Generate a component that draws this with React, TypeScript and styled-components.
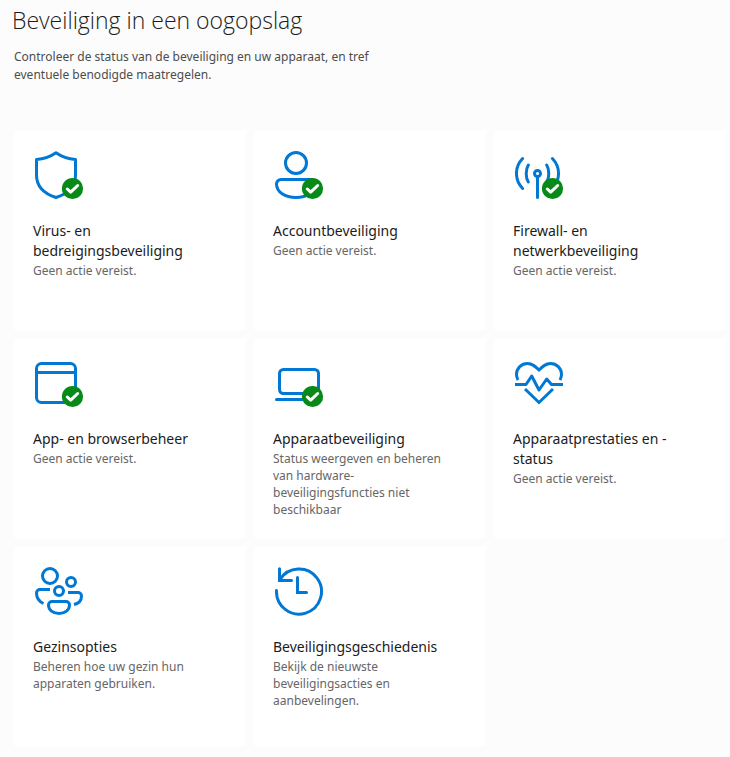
import React from "react";
import styled, { createGlobalStyle } from "styled-components";

const GlobalStyle = createGlobalStyle`
  *, *::before, *::after { box-sizing: border-box; }
  body {
    margin: 0;
    background: #fcfcfc;
    color: #1b1b1b;
    font-family: "Segoe UI", "Noto Sans", "Open Sans", sans-serif;
  }
`;

const Page = styled.main`
  padding: 4px 4px 11px 14px;
`;

const Title = styled.h1`
  margin: 0 0 0 -2px;
  font-family: "Segoe UI", "Open Sans", "Noto Sans", sans-serif;
  font-size: 23px;
  line-height: 32px;
  font-weight: 300;
`;

const Intro = styled.p`
  margin: 12px 0 46px;
  max-width: 400px;
  font-size: 12px;
  line-height: 18px;
  color: #4c4c4c;
`;

const CardGrid = styled.div`
  display: grid;
  grid-template-columns: repeat(3, minmax(0, 1fr));
  grid-auto-rows: minmax(200px, auto);
  gap: 8px;
`;

const Card = styled.a`
  display: flex;
  flex-direction: column;
  padding: 21px 32px 16px 19px;
  background: #ffffff;
  color: inherit;
  text-decoration: none;
`;

const Icon = styled.svg`
  width: 49px;
  height: 49px;
  margin-left: 2px;
  fill: none;
  stroke: #0078d4;
  stroke-width: 3;
  stroke-linecap: butt;
  stroke-linejoin: round;
`;

const CardTitle = styled.h2`
  margin: 21px 0 0;
  font-size: 14px;
  line-height: 20px;
  font-weight: 400;
`;

const CardText = styled.p`
  margin: 1px 0 0;
  font-size: 12px;
  line-height: 17px;
  color: #666666;
`;

const shapes = {
  shield: (
    <path d="M21 1.8C15 6 8.5 8 1.5 8.5V24C1.5 36 10 43 21 46.5C32 43 40.5 36 40.5 24V8.5C33.5 8 27 6 21 1.8Z" />
  ),
  account: (
    <>
      <circle cx="21" cy="12" r="10.5" />
      <path d="M6 28.5H36A4.5 4.5 0 0 1 40.5 33C40.5 41 32 46.5 21 46.5S1.5 41 1.5 33A4.5 4.5 0 0 1 6 28.5Z" />
    </>
  ),
  network: (
    <g strokeLinecap="round">
      <circle cx="22.5" cy="22.5" r="3" />
      <path d="M22.5 26V46.5M13.3 14C10.5 18.6 10.5 26.4 13.3 31M31.7 14C34.5 18.6 34.5 26.4 31.7 31M7.6 7.5C-0.6 16 -0.6 29 7.6 37.5M37.4 7.5C45.6 16 45.6 29 37.4 37.5" />
    </g>
  ),
  browser: (
    <>
      <rect x="1.5" y="4.5" width="39" height="39" rx="5" />
      <path d="M1.5 13.5H40.5" />
    </>
  ),
  device: (
    <>
      <rect x="4.5" y="10.5" width="39" height="24" rx="4" />
      <path d="M1.5 40.5H46" strokeLinecap="round" />
    </>
  ),
  heart: (
    <g strokeLinejoin="miter">
      <path d="M3 21C2 19 1.5 17.5 1.5 15.5C1.5 9 6.5 4.5 12.5 4.5C17.5 4.5 20.5 7.5 24 11C27.5 7.5 30.5 4.5 35.5 4.5C41.5 4.5 46.5 9 46.5 15.5C46.5 17.5 46 19 45 21" />
      <path d="M0 25.5H11L16.7 17L24 31L31.7 20L36.5 25.5H48" strokeLinejoin="round" />
      <path d="M10 30L24 43.5L38 30" />
    </g>
  ),
  family: (
    <>
      <circle cx="15" cy="9" r="7.5" />
      <circle cx="36" cy="15" r="4.5" />
      <circle cx="24" cy="24" r="4.5" />
      <path d="M15 22.5H5A3.5 3.5 0 0 0 1.5 26C1.5 30.5 4 34.5 8.5 36.5M33 25.5H43A3.5 3.5 0 0 1 46.5 29C46.5 33.5 43.5 36.5 39 37.5" />
      <path d="M17 34.5H31A3.5 3.5 0 0 1 34.5 38C34.5 43 30 46.5 24 46.5S13.5 43 13.5 38A3.5 3.5 0 0 1 17 34.5Z" />
    </>
  ),
  history: (
    <g strokeLinecap="round">
      <path d="M1.5 23.5A22.5 22.5 0 1 0 5 12.5" />
      <path d="M4.5 1.8V13.5H16.5" strokeLinejoin="miter" />
      <path d="M22.5 10.5V25.5H31.5" strokeLinejoin="miter" />
    </g>
  ),
};

const OkBadge = () => (
  <>
    <circle cx="37.5" cy="37.5" r="10.6" fill="#078a17" stroke="none" />
    <path d="M32.3 38L35.7 41.2L42.7 34.5" stroke="#ffffff" strokeLinecap="round" />
  </>
);

type Section = {
  icon: keyof typeof shapes;
  ok?: boolean;
  title: string;
  text: string;
};

const sections: Section[] = [
  { icon: "shield", ok: true, title: "Virus- en bedreigingsbeveiliging", text: "Geen actie vereist." },
  { icon: "account", ok: true, title: "Accountbeveiliging", text: "Geen actie vereist." },
  { icon: "network", ok: true, title: "Firewall- en netwerkbeveiliging", text: "Geen actie vereist." },
  { icon: "browser", ok: true, title: "App- en browserbeheer", text: "Geen actie vereist." },
  {
    icon: "device",
    ok: true,
    title: "Apparaatbeveiliging",
    text: "Status weergeven en beheren van hardware-beveiligingsfuncties niet beschikbaar",
  },
  { icon: "heart", title: "Apparaatprestaties en -status", text: "Geen actie vereist." },
  { icon: "family", title: "Gezinsopties", text: "Beheren hoe uw gezin hun apparaten gebruiken." },
  {
    icon: "history",
    title: "Beveiligingsgeschiedenis",
    text: "Bekijk de nieuwste beveiligingsacties en aanbevelingen.",
  },
];

export default function App() {
  return (
    <>
      <GlobalStyle />
      <Page>
        <Title>Beveiliging in een oogopslag</Title>
        <Intro>
          Controleer de status van de beveiliging en uw apparaat, en tref eventuele benodigde
          maatregelen.
        </Intro>
        <CardGrid>
          {sections.map((section) => (
            <Card href="#" key={section.title}>
              <Icon viewBox="0 0 49 49" aria-hidden="true">
                {shapes[section.icon]}
                {section.ok && <OkBadge />}
              </Icon>
              <CardTitle>{section.title}</CardTitle>
              <CardText>{section.text}</CardText>
            </Card>
          ))}
        </CardGrid>
      </Page>
    </>
  );
}
